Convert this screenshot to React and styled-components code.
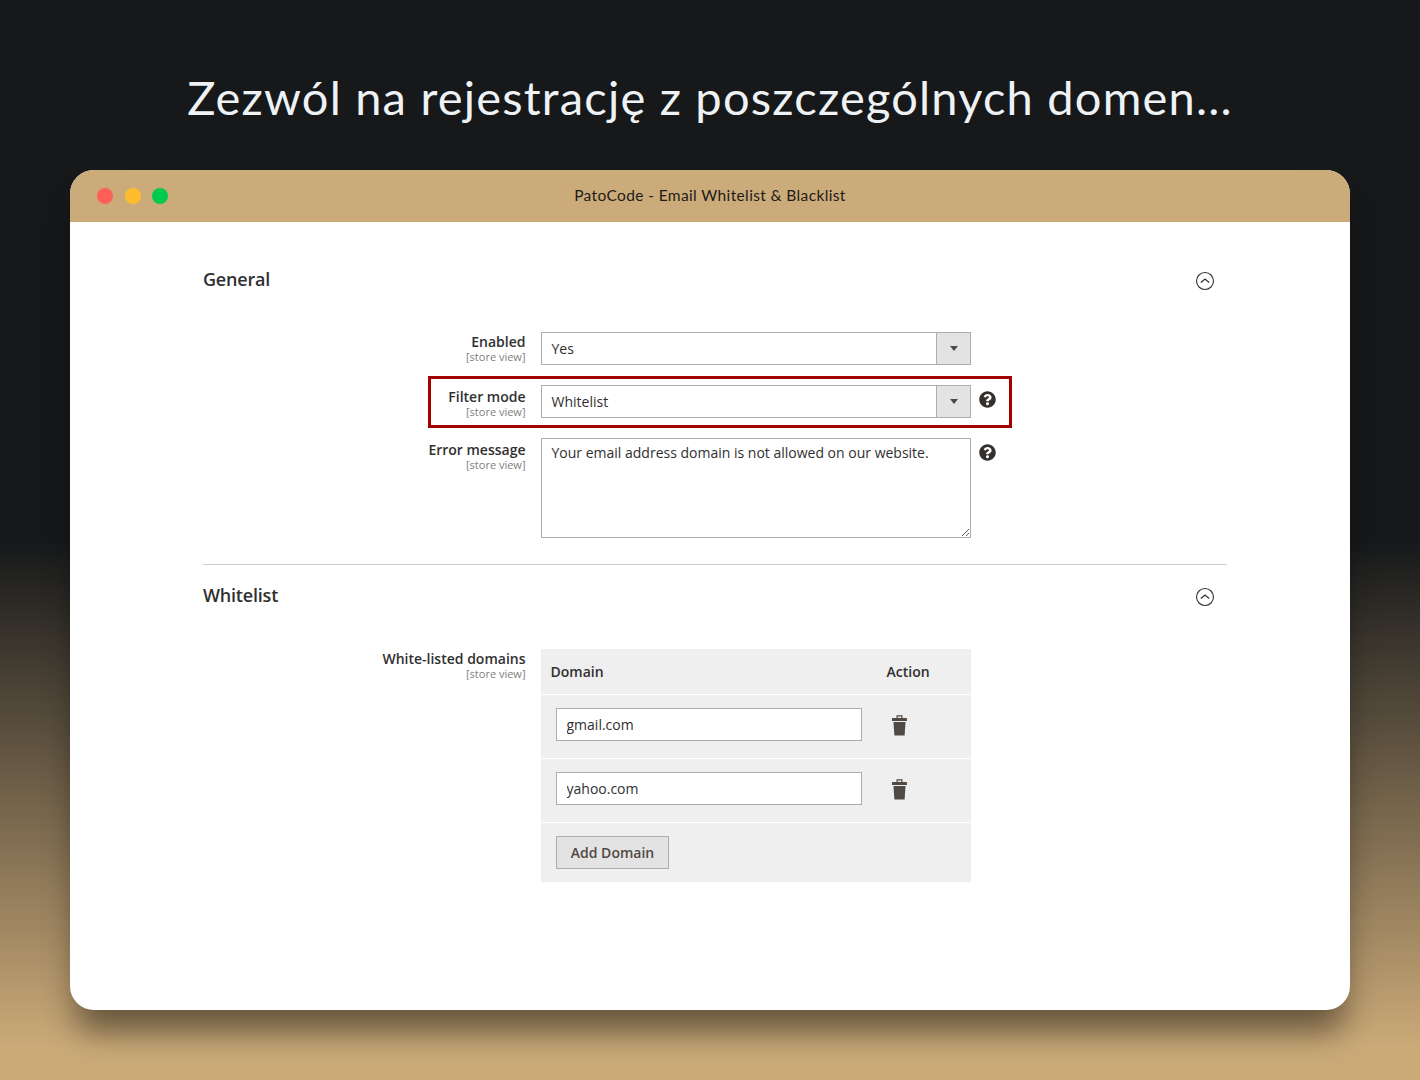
import React from 'react'
import styled, { createGlobalStyle } from 'styled-components'
import { FaQuestionCircle } from 'react-icons/fa'

const GlobalStyle = createGlobalStyle`
    html, body {
        margin: 0;
        padding: 0;
    }
    body {
        font-family: "Open Sans", "Liberation Sans", sans-serif;
        color: #303030;
    }
`

const ChevronCircle = () => (
    <svg width="20" height="20" viewBox="0 0 20 20" fill="none" stroke="#333" strokeWidth="1.1">
        <circle cx="10" cy="10" r="8.5" />
        <path d="M5.8 11.6 L10 8 L14.2 11.6" strokeWidth="1.3" />
    </svg>
)

const TrashIcon = () => (
    <svg width="15" height="21" viewBox="0.5 0.5 15 21" fill="#514943">
        <path d="M5 3.5 V0.8 H11 V3.5 H9.8 V2 H6.2 V3.5 Z" />
        <rect x="0.5" y="3.5" width="15" height="3" rx="0.6" />
        <path d="M2 7.6 H14 L13.1 21 H2.9 Z" />
    </svg>
)

const Help = () => (
    <HelpIcon>
        <FaQuestionCircle size={17} />
    </HelpIcon>
)

const SelectField = ({ value }) => (
    <Select>
        <SelectValue>{value}</SelectValue>
        <SelectArrow />
    </Select>
)

const FieldLabel = ({ title, offset = 1 }) => (
    <LabelBox offset={offset}>
        <LabelTitle>{title}</LabelTitle>
        <LabelScope>[store view]</LabelScope>
    </LabelBox>
)

const domains = ['gmail.com', 'yahoo.com']

const App = () => (
    <Page>
        <GlobalStyle />
        <Headline>Zezwól na rejestrację z poszczególnych domen...</Headline>
        <Window>
            <TitleBar>
                <Dots>
                    <Dot color="#ff5f57" />
                    <Dot color="#ffbd2e" />
                    <Dot color="#00ca4e" />
                </Dots>
                <WindowTitle>PatoCode - Email Whitelist &amp; Blacklist</WindowTitle>
            </TitleBar>
            <Content>
                <Section>
                    <SectionHead>
                        <SectionTitle>General</SectionTitle>
                        <Collapse><ChevronCircle /></Collapse>
                    </SectionHead>
                    <Fields>
                        <Row>
                            <FieldLabel title="Enabled" />
                            <SelectField value="Yes" />
                        </Row>
                        <Row highlighted>
                            <FieldLabel title="Filter mode" offset={3} />
                            <SelectField value="Whitelist" />
                            <Help />
                        </Row>
                        <Row>
                            <FieldLabel title="Error message" offset={3} />
                            <TextArea readOnly value="Your email address domain is not allowed on our website." />
                            <Help />
                        </Row>
                    </Fields>
                </Section>
                <Section divided>
                    <SectionHead>
                        <SectionTitle>Whitelist</SectionTitle>
                        <Collapse><ChevronCircle /></Collapse>
                    </SectionHead>
                    <Row>
                        <FieldLabel title="White-listed domains" />
                        <DomainTable>
                            <TableHead>
                                <DomainCell>Domain</DomainCell>
                                <span>Action</span>
                            </TableHead>
                            {domains.map(v => (
                                <TableRow key={v}>
                                    <TextInput readOnly value={v} />
                                    <DeleteButton type="button"><TrashIcon /></DeleteButton>
                                </TableRow>
                            ))}
                            <TableFoot>
                                <AddButton type="button">Add Domain</AddButton>
                            </TableFoot>
                        </DomainTable>
                    </Row>
                </Section>
            </Content>
        </Window>
    </Page>
)

const Page = styled.div`
    width: 1420px;
    height: 1080px;
    overflow: hidden;
    padding: 70px 70px 0;
    box-sizing: border-box;
    background: linear-gradient(180deg, #16181a 0%, #16181a 50%, #cbaa78 97%, #cbaa78 100%);
`
const Headline = styled.h1`
    margin: 0 0 40px;
    height: 60px;
    line-height: 54px;
    text-align: center;
    white-space: nowrap;
    font-family: Lato, "Liberation Sans", sans-serif;
    font-size: 47px;
    font-weight: 400;
    letter-spacing: 1.2px;
    color: #eef2f5;
`
const Window = styled.div`
    height: 840px;
    border-radius: 24px;
    background: #fff;
    box-shadow: 0 28px 32px -6px rgba(0, 0, 0, 0.46);
    overflow: hidden;
`
const TitleBar = styled.div`
    position: relative;
    height: 52px;
    display: flex;
    align-items: center;
    justify-content: center;
    background: #ccab7a;
`
const Dots = styled.div`
    position: absolute;
    left: 27px;
    top: 18px;
    display: flex;
    gap: 11.5px;
`
const Dot = styled.span`
    width: 16px;
    height: 16px;
    border-radius: 50%;
    background: ${props => props.color};
`
const WindowTitle = styled.div`
    margin-top: -2px;
    font-family: Lato, "Liberation Sans", sans-serif;
    font-size: 15.5px;
    letter-spacing: 0.37px;
    color: #1d1b17;
`
const Content = styled.div`
    padding: 42px 123px 0 133px;
`
const Section = styled.section`
    ${props => props.divided && `
        margin-top: 26px;
        padding-top: 15px;
        border-top: 1px solid #cccccc;
    `}
`
const SectionHead = styled.div`
    height: 32px;
    display: flex;
    align-items: center;
    justify-content: space-between;
    margin-bottom: 36px;

    section + section & {
        margin-bottom: 37px;
    }
`
const SectionTitle = styled.h2`
    margin: -2px 0 0;
    font-size: 18px;
    font-weight: 600;
    letter-spacing: -0.2px;
    color: #303030;
`
const Collapse = styled.div`
    display: flex;
    margin: 2px 12.5px 0 0;
`
const Fields = styled.div`
    display: flex;
    flex-direction: column;
    gap: 20px;
`
const Row = styled.div`
    position: relative;
    display: flex;
    align-items: flex-start;
    ${props => props.highlighted && `
        &::after {
            content: '';
            position: absolute;
            left: 225px;
            top: -9px;
            width: 578px;
            height: 46px;
            border: 3px solid #a30000;
            pointer-events: none;
        }
    `}
`
const LabelBox = styled.div`
    width: 322.5px;
    margin-right: 15.5px;
    padding-top: ${props => props.offset}px;
    text-align: right;
    flex-shrink: 0;
`
const LabelTitle = styled.div`
    font-size: 14px;
    font-weight: 600;
    line-height: 18px;
    color: #303030;
`
const LabelScope = styled.div`
    font-size: 11px;
    line-height: 12px;
    color: #808080;
`
const Select = styled.div`
    width: 430px;
    height: 33px;
    box-sizing: border-box;
    display: flex;
    border: 1px solid #adadad;
    background: #fff;
`
const SelectValue = styled.div`
    flex: 1;
    padding-left: 9.5px;
    font-size: 14px;
    line-height: 31px;
    color: #303030;
`
const SelectArrow = styled.div`
    position: relative;
    width: 33px;
    border-left: 1px solid #adadad;
    background: #e3e3e3;

    &::after {
        content: '';
        position: absolute;
        left: 13px;
        top: 13px;
        border-style: solid;
        border-width: 5px 4px 0;
        border-color: #514943 transparent transparent;
    }
`
const HelpIcon = styled.div`
    display: flex;
    margin: 6px 0 0 8px;
    color: #33302e;
`
const TextArea = styled.textarea`
    width: 430px;
    height: 100px;
    box-sizing: border-box;
    padding: 5px 9.5px;
    border: 1px solid #adadad;
    border-radius: 0;
    outline: none;
    resize: both;
    font-family: inherit;
    font-size: 14px;
    line-height: 18px;
    color: #303030;
`
const DomainTable = styled.div`
    width: 430px;
    display: flex;
    flex-direction: column;
    gap: 1px;
    font-size: 14px;
    color: #303030;
`
const TableHead = styled.div`
    height: 45px;
    display: flex;
    align-items: center;
    padding-left: 9.5px;
    box-sizing: border-box;
    background: #efefef;
    font-weight: 600;
    font-size: 14px;
`
const DomainCell = styled.span`
    width: 336px;
`
const TableRow = styled.div`
    height: 63px;
    display: flex;
    align-items: flex-start;
    padding: 13px 0 0 15px;
    box-sizing: border-box;
    background: #efefef;
`
const TextInput = styled.input`
    width: 306px;
    height: 33px;
    box-sizing: border-box;
    padding: 0 9.5px;
    border: 1px solid #adadad;
    border-radius: 0;
    outline: none;
    font-family: inherit;
    font-size: 14px;
    color: #303030;
`
const DeleteButton = styled.button`
    display: flex;
    margin: 7px 0 0 30px;
    padding: 0;
    border: 0;
    background: none;
`
const TableFoot = styled.div`
    height: 59px;
    padding: 13px 15px 0;
    box-sizing: border-box;
    background: #efefef;
`
const AddButton = styled.button`
    width: 113px;
    height: 33px;
    padding: 0;
    border: 1px solid #adadad;
    background: #e3e3e3;
    font-family: inherit;
    font-size: 14px;
    font-weight: 600;
    color: #514943;
`

export default App
